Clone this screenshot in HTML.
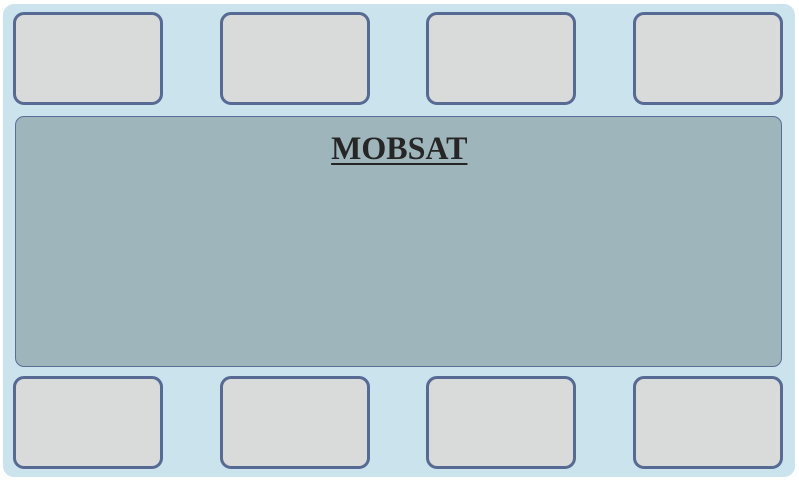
<!DOCTYPE html>
<html><head><style>
html,body{margin:0;padding:0;background:#fff;width:799px;height:481px;overflow:hidden;position:relative}
.outer{position:absolute;left:3px;top:4px;width:792px;height:473px;background:#cae3ec;border-radius:11px}
.b{position:absolute;box-sizing:border-box;width:150px;height:93px;background:#d9dada;border:3.5px solid #566a93;border-radius:11px}
.mid{position:absolute;left:15px;top:116px;width:767px;height:251px;box-sizing:border-box;background:#9fb5bc;border:1.5px solid #5a6e95;border-radius:9px}
.t{position:absolute;left:0;width:799px;top:131px;text-align:center;font-family:"Liberation Serif",serif;font-weight:bold;font-size:33px;color:#262626}
.t span{display:inline-block;transform:scaleX(0.97);text-decoration:underline;text-decoration-thickness:2px;text-underline-offset:4px}
</style></head><body>
<div class="outer"></div>
<div class="b" style="left:13px;top:12px"></div>
<div class="b" style="left:220px;top:12px"></div>
<div class="b" style="left:426px;top:12px"></div>
<div class="b" style="left:633px;top:12px"></div>
<div class="mid"></div>
<div class="t"><span>MOBSAT</span></div>
<div class="b" style="left:13px;top:376px"></div>
<div class="b" style="left:220px;top:376px"></div>
<div class="b" style="left:426px;top:376px"></div>
<div class="b" style="left:633px;top:376px"></div>
</body></html>
